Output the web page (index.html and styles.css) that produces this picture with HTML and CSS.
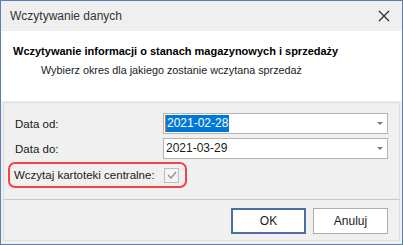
FILE: index.html
```html
<!DOCTYPE html>
<html lang="pl">
<head>
    <meta charset="UTF-8">
    <title>Wczytywanie danych</title>
    <link rel="stylesheet" href="styles.css">
</head>
<body>
    <div class="window">
        <div class="titlebar">
            <span class="title">Wczytywanie danych</span>
            <svg class="close" width="12" height="12" viewBox="0 0 12 12">
                <path d="M1 1 L11 11 M11 1 L1 11" stroke="#222" stroke-width="1.1" fill="none"/>
            </svg>
        </div>

        <div class="header">
            <div class="header-title">Wczytywanie informacji o stanach magazynowych i sprzedaży</div>
            <div class="header-sub">Wybierz okres dla jakiego zostanie wczytana sprzedaż</div>
        </div>

        <div class="content">
            <div class="panel">
                <div class="row">
                    <span class="label">Data od:</span>
                    <div class="combo">
                        <span class="value selected">2021-02-28</span>
                        <span class="arrow"></span>
                    </div>
                </div>
                <div class="row">
                    <span class="label">Data do:</span>
                    <div class="combo">
                        <span class="value">2021-03-29</span>
                        <span class="arrow"></span>
                    </div>
                </div>
                <div class="check-row">
                    <span class="label">Wczytaj kartoteki centralne:</span>
                    <span class="checkbox">
                        <svg width="10" height="8" viewBox="0 0 10 8">
                            <path d="M1 4 L4 7 L9 1" stroke="#8c8c8c" stroke-width="1.2" fill="none"/>
                        </svg>
                    </span>
                </div>
            </div>
            <div class="buttons">
                <button class="btn default">OK</button>
                <button class="btn">Anuluj</button>
            </div>
        </div>
    </div>
</body>
</html>
```

FILE: styles.css
```css
html, body {
    margin: 0;
    padding: 0;
}
body {
    font-family: "Liberation Sans", Arial, sans-serif;
    font-size: 11px;
    color: #1a1a1a;
    background: #fff;
}
.window {
    width: 403px;
    height: 245px;
    box-sizing: border-box;
    border: 1px solid #5b7db4;
    display: flex;
    flex-direction: column;
}
.titlebar {
    height: 30px;
    background-color: #efefef;
    display: flex;
    align-items: center;
    justify-content: space-between;
    padding: 0 12px 0 9px;
}
.title {
    font-size: 12px;
    color: #333;
}
.close {
    display: block;
}
.header {
    background-color: #fff;
    height: 70px;
    box-sizing: border-box;
    padding: 14px 12px 0 12px;
}
.header-title {
    font-weight: bold;
    font-size: 11px;
    color: #000;
}
.header-sub {
    margin-top: 7px;
    padding-left: 28px;
    font-size: 10.8px;
    color: #1a1a1a;
}
.content {
    flex: 1;
    background-color: #f0f0f0;
    padding: 1px 2px 3px 2px;
    display: flex;
    flex-direction: column;
}
.panel {
    height: 98px;
    box-sizing: border-box;
    border: 1px solid #dcdcdc;
    border-bottom: 1px solid #c8c8c8;
    padding: 10px 11px 0 4px;
}
.row {
    display: flex;
    align-items: center;
    justify-content: space-between;
    height: 21px;
    margin-bottom: 4px;
    padding-left: 7px;
}
.combo {
    width: 225px;
    height: 21px;
    box-sizing: border-box;
    border: 1px solid #b4b4b4;
    background-color: #fff;
    display: flex;
    align-items: center;
    justify-content: space-between;
    padding: 0 4px 0 1px;
    font-size: 12px;
}
.value {
    padding: 1px 1px;
    line-height: 15px;
}
.value.selected {
    background-color: #0078d7;
    color: #fff;
    border-left: 1px solid #e8702a;
}
.arrow {
    width: 0;
    height: 0;
    border-left: 3px solid transparent;
    border-right: 3px solid transparent;
    border-top: 3px solid #7a7a7a;
}
.row .label {
    font-size: 11.5px;
}
.check-row {
    display: flex;
    align-items: center;
    width: 171px;
    height: 22px;
    border: 2px solid #f0434a;
    border-radius: 7px;
    padding-left: 4px;
    margin-top: -1px;
}
.check-row .label {
    font-size: 11.5px;
    width: 150px;
}
.checkbox {
    width: 13px;
    height: 13px;
    border: 1px solid #bcbcbc;
    background-color: #f4f4f4;
    display: flex;
    align-items: center;
    justify-content: center;
}
.buttons {
    flex: 1;
    display: flex;
    justify-content: flex-end;
    align-items: flex-start;
    gap: 7px;
    padding: 8px 11px 0 0;
    border: 1px solid #dcdcdc;
    border-top: none;
}
.btn {
    width: 75px;
    height: 26px;
    box-sizing: border-box;
    background-color: #fff;
    border: 1px solid #adadad;
    font-family: "Liberation Sans", Arial, sans-serif;
    font-size: 12px;
    color: #1a1a1a;
    padding: 0;
}
.btn.default {
    border: 2px solid #4c6fa3;
}
```
